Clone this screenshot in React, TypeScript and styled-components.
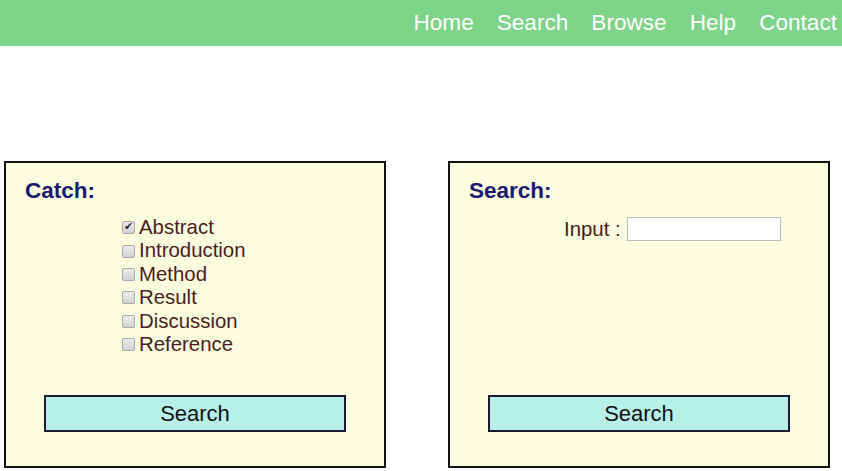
import styled, { createGlobalStyle } from "styled-components";

const GlobalStyle = createGlobalStyle`
  body {
    margin: 0;
    background: #ffffff;
    font-family: "Liberation Sans", Arial, sans-serif;
  }
`;

const Header = styled.header`
  height: 46px;
  background: #7dd387;
  display: flex;
  justify-content: flex-end;
  align-items: center;
  padding-right: 5px;
  gap: 23px;
`;

const NavLink = styled.a`
  color: #ffffff;
  font-size: 22.6px;
  text-decoration: none;
`;

const Panels = styled.main`
  display: flex;
  gap: 62px;
  padding: 115px 0 0 4px;
`;

const Panel = styled.section`
  width: 378px;
  height: 253px;
  border: 2px solid #111;
  background: #fcfcdf;
  display: flex;
  flex-direction: column;
  padding: 16px 0 34px;
`;

const Title = styled.h2`
  margin: 0 0 0 19px;
  font-size: 22.5px;
  font-weight: bold;
  color: #191970;
  line-height: 23px;
`;

const List = styled.div`
  display: flex;
  flex-direction: column;
  margin: 14px 0 0 116px;
`;

const Option = styled.label`
  display: flex;
  align-items: center;
  font-size: 20.4px;
  line-height: 23.4px;
  color: #4a1c1c;
`;

const Box = styled.input`
  appearance: none;
  position: relative;
  width: 13px;
  height: 13px;
  margin: 0 4px 0 0;
  border: 1px solid #a8a8a8;
  border-radius: 2px;
  background: linear-gradient(#ececec, #d2d2d2);
  box-sizing: border-box;

  &:checked::after {
    content: "✔";
    position: absolute;
    left: 1px;
    top: -2px;
    font-size: 11px;
    color: #333;
  }
`;

const InputRow = styled.div`
  display: flex;
  align-items: center;
  margin: 15px 0 0 114px;
  font-size: 20.4px;
  color: #4a1c1c;
  gap: 6px;
`;

const TextBox = styled.input`
  width: 154px;
  height: 24px;
  box-sizing: border-box;
  border: 1px solid #bbb;
  background: #fff;
`;

const SearchButton = styled.button`
  margin: auto auto 0;
  width: 302px;
  height: 37px;
  background: #b6f0e8;
  border: 2px solid #1a1a30;
  font-family: "Liberation Sans", Arial, sans-serif;
  font-size: 22px;
  color: #111;
  padding: 0;
`;

const sections = ["Abstract", "Introduction", "Method", "Result", "Discussion", "Reference"];

export default function App() {
  return (
    <>
      <GlobalStyle />
      <Header>
        {["Home", "Search", "Browse", "Help", "Contact"].map((item) => (
          <NavLink key={item} href="#">
            {item}
          </NavLink>
        ))}
      </Header>
      <Panels>
        <Panel>
          <Title>Catch:</Title>
          <List>
            {sections.map((s, i) => (
              <Option key={s}>
                <Box type="checkbox" defaultChecked={i === 0} />
                {s}
              </Option>
            ))}
          </List>
          <SearchButton>Search</SearchButton>
        </Panel>
        <Panel>
          <Title>Search:</Title>
          <InputRow>
            Input :
            <TextBox type="text" />
          </InputRow>
          <SearchButton>Search</SearchButton>
        </Panel>
      </Panels>
    </>
  );
}
